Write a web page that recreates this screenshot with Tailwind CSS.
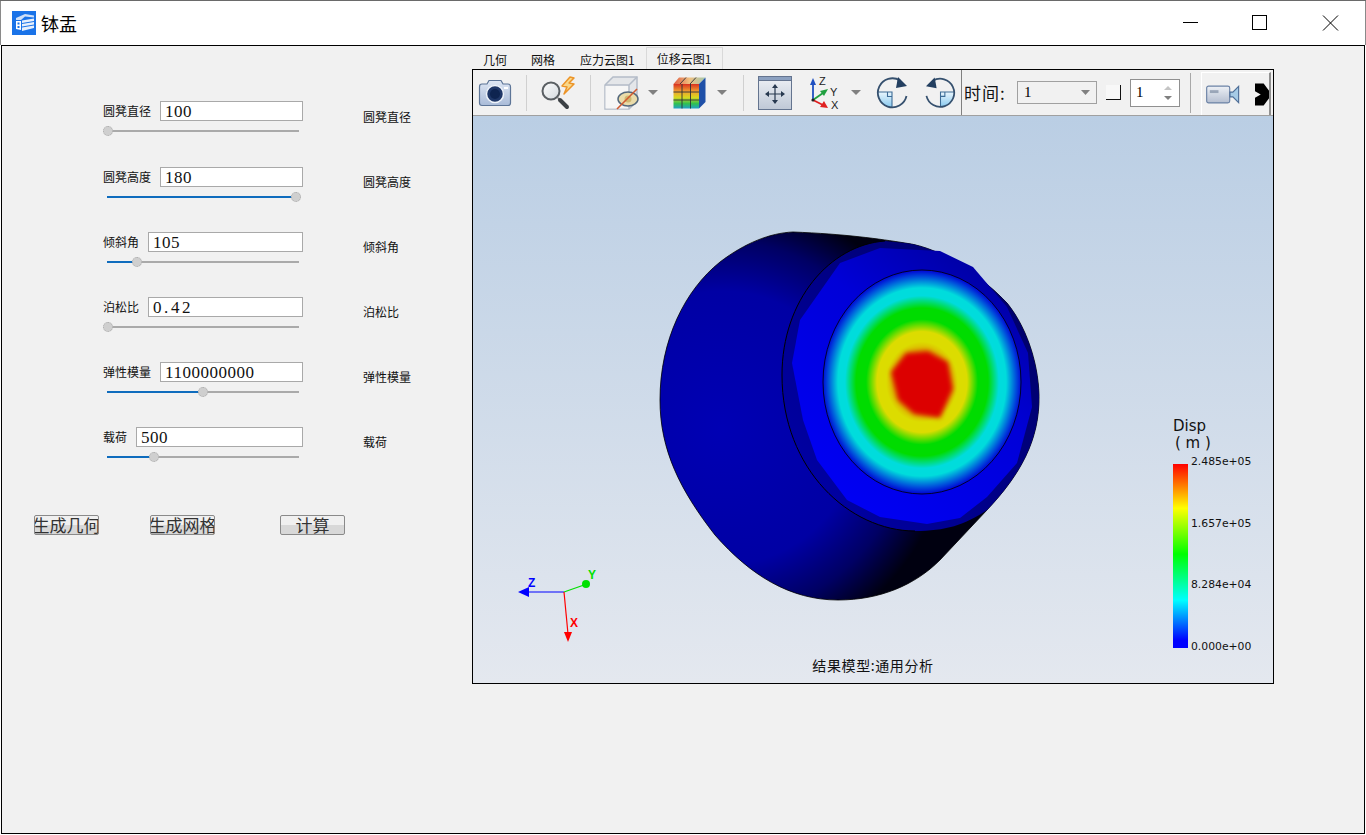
<!DOCTYPE html>
<html lang="en">
<head>
    <meta charset="UTF-8">
    <title>钵盂</title>
    <script src="https://cdn.jsdelivr.net/npm/@tailwindcss/browser@4"></script>
</head>
<body class="bg-white overflow-hidden font-['Noto_Sans_CJK_SC','Liberation_Sans',sans-serif] text-[#111]">
<div class="w-[1366px] h-[835px] flex flex-col border-t border-[#6a6a6a]">
    <!-- title bar -->
    <div class="h-[44px] flex items-center bg-white border-l border-r border-[#8a8a8a]">
        <svg class="ml-[11px] w-[24px] h-[24px]" viewBox="0 0 24 24">
            <rect width="24" height="24" fill="#1a73e8"/>
            <path d="M4 7 L13 3 L22 4.5 L22 6.5 L13 5.5 L9 9 L4 9Z" fill="#cfe0f8"/>
            <path d="M4 10 H9 V19 L4 18Z" fill="#fff"/>
            <path d="M10 9.5 L22 7.5 V10 L10 12Z M10 13 L22 11 V13.5 L10 15.5Z M10 16.5 L22 14.5 V17 L10 20Z" fill="#e8f0fc"/>
            <rect x="5.5" y="11.5" width="2" height="2" fill="#1a73e8"/>
            <rect x="5.5" y="15" width="2" height="2" fill="#1a73e8"/>
        </svg>
        <span class="ml-[5px] text-[18px] leading-none text-black">钵盂</span>
        <svg class="ml-auto mr-[26px] w-[156px] h-[16px]" viewBox="0 0 156 16" fill="none" stroke="#000" stroke-width="1">
            <path d="M0 7.5 H15"/>
            <rect x="69.5" y="0.5" width="14" height="14"/>
            <path d="M140 0.5 L155 15.5 M155 0.5 L140 15.5"/>
        </svg>
    </div>
    <!-- client area -->
    <div class="flex-1 flex mb-[1px] mx-[1px] border border-black bg-[#f1f1f1]">
        <!-- parameter panel -->
        <div class="w-[470px] shrink-0 pt-[55px]">
            <div class="pl-[101px]">
                <div class="flex h-[66px]">
                    <div class="w-[200px]">
                        <div class="flex items-center gap-[9px]"><span class="text-[12px] leading-none">圆凳直径</span><input value="100" class="flex-1 min-w-0 h-[20px] bg-white border border-[#a9a9a9] pl-[4px] pt-[2px] text-[17px] tracking-[0.5px] font-['Liberation_Serif',serif]"></div>
                        <div class="relative ml-[4px] mt-[5px] w-[192px] h-[10px] flex items-center"><div class="flex-1 h-[2px] bg-[#aaa]"></div><div class="absolute left-[-4px] top-0 w-[10px] h-[10px] rounded-full bg-[#cfcfcf] border border-dotted border-[#aaa]"></div></div>
                    </div>
                    <span class="ml-[60px] mt-[9px] text-[12px] leading-[14px]">圆凳直径</span>
                </div>
                <div class="flex h-[65px]">
                    <div class="w-[200px]">
                        <div class="flex items-center gap-[9px]"><span class="text-[12px] leading-none">圆凳高度</span><input value="180" class="flex-1 min-w-0 h-[20px] bg-white border border-[#a9a9a9] pl-[4px] pt-[2px] text-[17px] tracking-[0.5px] font-['Liberation_Serif',serif]"></div>
                        <div class="relative ml-[4px] mt-[5px] w-[192px] h-[10px] flex items-center"><div class="flex-1 h-[2px] bg-[#0f6cbd]"></div><div class="absolute left-[184px] top-0 w-[10px] h-[10px] rounded-full bg-[#cfcfcf] border border-dotted border-[#aaa]"></div></div>
                    </div>
                    <span class="ml-[60px] mt-[8px] text-[12px] leading-[14px]">圆凳高度</span>
                </div>
                <div class="flex h-[65px]">
                    <div class="w-[200px]">
                        <div class="flex items-center gap-[9px]"><span class="text-[12px] leading-none">倾斜角</span><input value="105" class="flex-1 min-w-0 h-[20px] bg-white border border-[#a9a9a9] pl-[4px] pt-[2px] text-[17px] tracking-[0.5px] font-['Liberation_Serif',serif]"></div>
                        <div class="relative ml-[4px] mt-[5px] w-[192px] h-[10px] flex items-center"><div class="w-[26px] h-[2px] bg-[#0f6cbd]"></div><div class="flex-1 h-[2px] bg-[#aaa]"></div><div class="absolute left-[25px] top-0 w-[10px] h-[10px] rounded-full bg-[#cfcfcf] border border-dotted border-[#aaa]"></div></div>
                    </div>
                    <span class="ml-[60px] mt-[8px] text-[12px] leading-[14px]">倾斜角</span>
                </div>
                <div class="flex h-[65px]">
                    <div class="w-[200px]">
                        <div class="flex items-center gap-[9px]"><span class="text-[12px] leading-none">泊松比</span><input value="0.42" class="flex-1 min-w-0 h-[20px] bg-white border border-[#a9a9a9] pl-[4px] pt-[2px] text-[17px] tracking-[2.6px] font-['Liberation_Serif',serif]"></div>
                        <div class="relative ml-[4px] mt-[5px] w-[192px] h-[10px] flex items-center"><div class="flex-1 h-[2px] bg-[#aaa]"></div><div class="absolute left-[-4px] top-0 w-[10px] h-[10px] rounded-full bg-[#cfcfcf] border border-dotted border-[#aaa]"></div></div>
                    </div>
                    <span class="ml-[60px] mt-[8px] text-[12px] leading-[14px]">泊松比</span>
                </div>
                <div class="flex h-[65px]">
                    <div class="w-[200px]">
                        <div class="flex items-center gap-[9px]"><span class="text-[12px] leading-none">弹性模量</span><input value="1100000000" class="flex-1 min-w-0 h-[20px] bg-white border border-[#a9a9a9] pl-[4px] pt-[2px] text-[17px] tracking-[0.5px] font-['Liberation_Serif',serif]"></div>
                        <div class="relative ml-[4px] mt-[5px] w-[192px] h-[10px] flex items-center"><div class="w-[96px] h-[2px] bg-[#0f6cbd]"></div><div class="flex-1 h-[2px] bg-[#aaa]"></div><div class="absolute left-[91px] top-0 w-[10px] h-[10px] rounded-full bg-[#cfcfcf] border border-dotted border-[#aaa]"></div></div>
                    </div>
                    <span class="ml-[60px] mt-[8px] text-[12px] leading-[14px]">弹性模量</span>
                </div>
                <div class="flex h-[65px]">
                    <div class="w-[200px]">
                        <div class="flex items-center gap-[9px]"><span class="text-[12px] leading-none">载荷</span><input value="500" class="flex-1 min-w-0 h-[20px] bg-white border border-[#a9a9a9] pl-[4px] pt-[2px] text-[17px] tracking-[0.5px] font-['Liberation_Serif',serif]"></div>
                        <div class="relative ml-[4px] mt-[5px] w-[192px] h-[10px] flex items-center"><div class="w-[44px] h-[2px] bg-[#0f6cbd]"></div><div class="flex-1 h-[2px] bg-[#aaa]"></div><div class="absolute left-[42px] top-0 w-[10px] h-[10px] rounded-full bg-[#cfcfcf] border border-dotted border-[#aaa]"></div></div>
                    </div>
                    <span class="ml-[60px] mt-[8px] text-[12px] leading-[14px]">载荷</span>
                </div>
            </div>
            <div class="flex pl-[32px] mt-[23px]">
                <button class="w-[65px] h-[20px] overflow-hidden flex items-center justify-center rounded-[2px] border border-[#8a8a8a] bg-[linear-gradient(#f0f0f0_50%,#d8d8d8_50%)] text-[17px] leading-[18px] whitespace-nowrap text-[#333]">生成几何</button>
                <button class="ml-[51px] w-[65px] h-[20px] overflow-hidden flex items-center justify-center rounded-[2px] border border-[#8a8a8a] bg-[linear-gradient(#f0f0f0_50%,#d8d8d8_50%)] text-[17px] leading-[18px] whitespace-nowrap text-[#333]">生成网格</button>
                <button class="ml-[65px] w-[65px] h-[20px] overflow-hidden flex items-center justify-center rounded-[2px] border border-[#8a8a8a] bg-[linear-gradient(#f0f0f0_50%,#d8d8d8_50%)] text-[17px] leading-[18px] whitespace-nowrap text-[#333]">计算</button>
            </div>
        </div>
        <!-- result panel -->
        <div class="w-[802px] shrink-0 flex flex-col pt-[1px]">
            <div class="h-[22px] flex items-end text-[12px] leading-none">
                <span class="ml-[11px] pb-[3px]">几何</span>
                <span class="ml-[24px] pb-[3px]">网格</span>
                <span class="ml-[25px] pb-[3px]">应力云图1</span>
                <span class="ml-[11px] h-[22px] w-[77px] flex items-center justify-center bg-[#f1f1f1] border border-b-0 border-[#d9d9d9]">位移云图1</span>
            </div>
            <div class="w-[802px] h-[615px] border border-black flex flex-col">
                <!-- toolbar -->
                <div class="h-[46px] shrink-0 flex items-center bg-[#f1f1f1] border-b border-[#a0a0a0]">
                    <svg class="ml-[5px] w-[34px] h-[28px]" viewBox="0 0 34 28">
                        <defs><linearGradient id="camBody" x1="0" y1="0" x2="0" y2="1"><stop offset="0" stop-color="#dfe7f4"/><stop offset="1" stop-color="#a9bbd8"/></linearGradient></defs>
                        <path d="M1.5 8 Q1.5 5 4 5 H9 L11 1.5 H23 L25 5 H30 Q32.5 5 32.5 8 V24 Q32.5 26.5 30 26.5 H4 Q1.5 26.5 1.5 24Z" fill="url(#camBody)" stroke="#5d7597" stroke-width="1.2"/>
                        <circle cx="17" cy="15" r="8.5" fill="#1f3768" stroke="#eef3fa" stroke-width="1.5"/>
                        <circle cx="17" cy="15" r="5" fill="#0e2450"/>
                        <rect x="26" y="8" width="4" height="2" fill="#fff"/>
                    </svg>
                    <div class="ml-[14px] w-px h-[36px] bg-[#d0d0d0]"></div>
                    <svg class="ml-[13px] w-[36px] h-[34px]" viewBox="0 0 36 34">
                        <defs><linearGradient id="lens" x1="0" y1="0" x2="1" y2="1"><stop offset="0" stop-color="#fdfdfd"/><stop offset="1" stop-color="#d4dade"/></linearGradient></defs>
                        <circle cx="11" cy="15" r="8.5" fill="url(#lens)" stroke="#5a5f63" stroke-width="2"/>
                        <path d="M18 22 L20 24" stroke="#777" stroke-width="2"/>
                        <path d="M20 24 L27 31" stroke="#3c4145" stroke-width="4" stroke-linecap="round"/>
                        <path d="M30 1 L22 10 L27 11 L24 18 L34 8 L29 7 L34 2Z" fill="#f9d88a" stroke="#ec9428" stroke-width="1.5" stroke-linejoin="round"/>
                    </svg>
                    <div class="ml-[14px] w-px h-[36px] bg-[#d0d0d0]"></div>
                    <svg class="ml-[13px] w-[35px] h-[34px]" viewBox="0 0 35 34">
                        <path d="M1 9 L9 1 H33 V25 L25 33 H1Z" fill="#e4e6e9" stroke="#b4bcc8" stroke-width="1.5"/>
                        <path d="M1.5 9.5 H25 V32.5 H1.5Z" fill="#f6f6f6"/>
                        <path d="M1 9 H25 V33 M25 9 L33 1" fill="none" stroke="#b4bcc8" stroke-width="1.5"/>
                        <ellipse cx="24" cy="23" rx="10" ry="7" fill="#eadcaa" stroke="#54687c" stroke-width="1.5"/>
                        <circle cx="24" cy="23" r="3.5" fill="#d0b870"/>
                        <path d="M13 33 L33 13" stroke="#d05a30" stroke-width="1.6"/>
                    </svg>
                    <svg class="ml-[9px] w-[10px] h-[5px]" viewBox="0 0 10 5"><path d="M0 0 H10 L5 5Z" fill="#808080"/></svg>
                    <svg class="ml-[15px] w-[33px] h-[32px]" viewBox="0 0 33 32">
                        <defs>
                            <linearGradient id="cubeTop" x1="0" y1="0" x2="1" y2="0"><stop offset="0" stop-color="#e05a40"/><stop offset="0.5" stop-color="#f0c080"/><stop offset="1" stop-color="#a0c8b0"/></linearGradient>
                            <linearGradient id="cubeFace" x1="0" y1="0" x2="0" y2="1"><stop offset="0" stop-color="#d83020"/><stop offset="0.3" stop-color="#f0a030"/><stop offset="0.55" stop-color="#d8d820"/><stop offset="0.8" stop-color="#30c050"/><stop offset="1" stop-color="#20a0c8"/></linearGradient>
                        </defs>
                        <path d="M6 0.5 H32.5 L26 7 H0.5Z" fill="url(#cubeTop)"/>
                        <path d="M26 7 L32.5 0.5 V25 L26 31.5Z" fill="#1f50a8"/>
                        <rect x="0.5" y="7" width="25.5" height="24.5" fill="url(#cubeFace)"/>
                        <path d="M9 7 V31.5 M17.5 7 V31.5 M0.5 15 H26 M0.5 23 H26 M13 0.5 L7 7 M23 0.5 L17 7" stroke="#2c3038" stroke-width="0.9"/>
                    </svg>
                    <svg class="ml-[11px] w-[10px] h-[5px]" viewBox="0 0 10 5"><path d="M0 0 H10 L5 5Z" fill="#808080"/></svg>
                    <div class="ml-[16px] w-px h-[36px] bg-[#d0d0d0]"></div>
                    <svg class="ml-[14px] w-[34px] h-[34px]" viewBox="0 0 34 34">
                        <defs><linearGradient id="fitBg" x1="0" y1="0" x2="0" y2="1"><stop offset="0" stop-color="#eef1f6"/><stop offset="1" stop-color="#bfc8d6"/></linearGradient></defs>
                        <rect x="0.5" y="0.5" width="33" height="33" fill="url(#fitBg)" stroke="#64748f"/>
                        <rect x="0.5" y="0.5" width="33" height="4" fill="#8ba0c0" stroke="#64748f"/>
                        <path d="M17 10 V26 M9 18 H25" stroke="#27384f" stroke-width="1.2"/>
                        <path d="M17 8 L14 12 H20Z M17 28 L14 24 H20Z M7 18 L11 15 V21Z M27 18 L23 15 V21Z" fill="#27384f"/>
                    </svg>
                    <svg class="ml-[16px] w-[32px] h-[34px] mr-[-2px]" viewBox="0 0 32 34">
                        <path d="M5 24 V7" stroke="#2050c0" stroke-width="1.8"/>
                        <path d="M5 2 L2 9 H8Z" fill="#2050c0"/>
                        <path d="M5 24 L15 17" stroke="#20a040" stroke-width="1.8"/>
                        <path d="M20 13 L12 15 L16 20Z" fill="#20a040"/>
                        <path d="M5 24 L15 29" stroke="#e02020" stroke-width="1.8"/>
                        <path d="M20 32 L12 31 L16 25Z" fill="#e02020"/>
                        <circle cx="5" cy="24" r="1.6" fill="#222"/>
                        <text x="11" y="9" font-size="11" font-family="Liberation Sans" fill="#222">Z</text>
                        <text x="22" y="20" font-size="11" font-family="Liberation Sans" fill="#222">Y</text>
                        <text x="23" y="33" font-size="11" font-family="Liberation Sans" fill="#222">X</text>
                    </svg>
                    <svg class="ml-[13px] w-[10px] h-[5px]" viewBox="0 0 10 5"><path d="M0 0 H10 L5 5Z" fill="#808080"/></svg>
                    <svg class="ml-[15px] w-[32px] h-[32px]" viewBox="0 0 32 32">
                        <defs><linearGradient id="rotFill" x1="0" y1="0" x2="0" y2="1"><stop offset="0" stop-color="#eaf6fd"/><stop offset="1" stop-color="#86c8ee"/></linearGradient></defs>
                        <path d="M16 15 H1.5 A14.5 15 0 0 0 16 30.5Z" fill="url(#rotFill)"/>
                        <path d="M1.5 15 H16 V30.5 M11.5 15 V19.5 H16" fill="none" stroke="#3d6c96" stroke-width="1.1"/>
                        <path d="M24 3.5 A14.5 14.5 0 1 0 30.5 19" fill="none" stroke="#35506e" stroke-width="1.8"/>
                        <path d="M22 0 L31 9 L20 11Z" fill="#233f60"/>
                    </svg>
                    <svg class="ml-[17px] w-[31px] h-[32px]" viewBox="0 0 32 32">
                        <path d="M16 15 H30.5 A14.5 15 0 0 1 16 30.5Z" fill="url(#rotFill)"/>
                        <path d="M30.5 15 H16 V30.5 M20.5 15 V19.5 H16" fill="none" stroke="#3d6c96" stroke-width="1.1"/>
                        <path d="M8 3.5 A14.5 14.5 0 1 1 1.5 19" fill="none" stroke="#35506e" stroke-width="1.8"/>
                        <path d="M10 0 L1 9 L12 11Z" fill="#233f60"/>
                    </svg>
                    <div class="ml-[5px] w-px h-full bg-[#808080]"></div>
                    <span class="ml-[2px] w-[42px] text-[17px] tracking-[1px] leading-none whitespace-nowrap">时间:</span>
                    <div class="ml-[11px] w-[80px] h-[23px] flex items-center border border-[#a0a0a0] pl-[6px] pr-[6px] text-[15px] leading-none text-black font-['Liberation_Serif',serif]">1<svg class="ml-auto w-[9px] h-[5px]" viewBox="0 0 9 5"><path d="M0 0 H9 L4.5 5Z" fill="#808080"/></svg></div>
                    <div class="ml-[9px] w-[15px] h-[15px] border-r border-b border-[#111] bg-[#f8f8f8]"></div>
                    <div class="ml-[9px] w-[50px] h-[28px] flex items-center justify-between bg-white border border-[#909090] pl-[5px] pr-[7px] text-[15px] leading-none text-black font-['Liberation_Serif',serif]">1
                        <svg class="w-[8px] h-[14px]" viewBox="0 0 8 14"><path d="M0 4 L4 0 L8 4Z" fill="#c4c4c4"/><path d="M0 10 H8 L4 14Z" fill="#808080"/></svg>
                    </div>
                    <div class="ml-[10px] w-px h-[40px] bg-[#a8a8a8]"></div>
                    <div class="ml-[10px] w-[70px] h-[43px] mt-[2px] flex items-center bg-[#f1f1f1] border-t border-l border-r-2 border-t-white border-l-white border-r-[#909090]">
                        <svg class="ml-[4px] w-[35px] h-[19px]" viewBox="0 0 35 19">
                            <defs><linearGradient id="vidBody" x1="0" y1="0" x2="0" y2="1"><stop offset="0" stop-color="#eef1f6"/><stop offset="1" stop-color="#b4bed0"/></linearGradient></defs>
                            <rect x="0.7" y="0.7" width="24" height="17.6" rx="2" fill="url(#vidBody)" stroke="#6b82a5" stroke-width="1.2"/>
                            <rect x="4" y="5" width="9" height="3" fill="#9aa6b8"/>
                            <path d="M25 7 L28 7 L34 1 V18 L28 12 L25 12Z" fill="#a6cbe6" stroke="#4f6f98" stroke-width="1.2"/>
                        </svg>
                        <svg class="ml-[15px] w-[15px] h-[23px]" viewBox="0 0 15 23">
                            <defs><filter id="soft"><feGaussianBlur stdDeviation="0.7"/></filter></defs>
                            <rect width="15" height="23" fill="#f1f1f1"/>
                            <path d="M0 0 H9 L15 8 V15 L9 23 H0 V15 L6 11.5 L0 8Z" fill="#000" filter="url(#soft)"/>
                        </svg>
                    </div>
                </div>
                <!-- 3d view -->
                <div class="relative flex-1 bg-[linear-gradient(#bacee4,#e4e8ef)]">
                    <!-- viewBox origin matches the page position of the view -->
                    <svg class="absolute inset-0 w-full h-full" viewBox="473 116 800 567">
                        <defs>
                            <radialGradient id="bodyShade" gradientUnits="userSpaceOnUse" cx="722" cy="428" r="228">
                                <stop offset="0" stop-color="#0000b4"/>
                                <stop offset="0.6" stop-color="#0000a4"/>
                                <stop offset="0.82" stop-color="#000064"/>
                                <stop offset="1" stop-color="#000010"/>
                            </radialGradient>
                            <linearGradient id="rimShade" gradientUnits="userSpaceOnUse" x1="800" y1="480" x2="1030" y2="300">
                                <stop offset="0" stop-color="#0000a4"/>
                                <stop offset="1" stop-color="#000068"/>
                            </linearGradient>
                            <linearGradient id="bandShade" gradientUnits="userSpaceOnUse" x1="820" y1="500" x2="1010" y2="270">
                                <stop offset="0" stop-color="#0000f6"/>
                                <stop offset="0.6" stop-color="#0000d8"/>
                                <stop offset="1" stop-color="#00009c"/>
                            </linearGradient>
                            <radialGradient id="faceDisp" gradientUnits="userSpaceOnUse" cx="0" cy="0" r="1" gradientTransform="translate(922 382) scale(100 112)">
                                <stop offset="0" stop-color="#dc9000"/>
                                <stop offset="0.28" stop-color="#dcb000"/>
                                <stop offset="0.36" stop-color="#dcdc00"/>
                                <stop offset="0.45" stop-color="#dcdc00"/>
                                <stop offset="0.56" stop-color="#00dc00"/>
                                <stop offset="0.66" stop-color="#00dc00"/>
                                <stop offset="0.77" stop-color="#00dcdc"/>
                                <stop offset="0.84" stop-color="#00dcdc"/>
                                <stop offset="0.94" stop-color="#0050dc"/>
                                <stop offset="1" stop-color="#0000d4"/>
                            </radialGradient>
                            <filter id="redBlur" x="-30%" y="-30%" width="160%" height="160%"><feGaussianBlur stdDeviation="2.5"/></filter>
                        </defs>
                        <path d="M793 232 C845 234 880 239 905 243 C945 248 985 280 1007 303 C1025 325 1038 360 1039 395 C1040 440 1020 475 987 510 L940 560 C915 585 880 600 838 600 C790 600 750 575 715 535 C680 490 660 450 660 400 C660 340 685 290 720 262 C745 243 770 233 793 232Z" fill="url(#bodyShade)" stroke="#000" stroke-width="0.8"/>
                        <path d="M905 243 C945 248 985 280 1007 303 C1025 325 1038 360 1039 395 C1040 440 1020 475 987 510 C965 525 945 531 915 531 C850 531 782 470 782 375 C782 300 830 245 885 241Z" fill="url(#rimShade)"/>
                        <path d="M782 375 C782 300 830 245 885 241 M782 375 C782 470 850 531 915 531" fill="none" stroke="#000" stroke-width="1"/>
                        <path d="M880 248 L940 251 L973 267 L1007 307 L1028 353 L1032 407 L1017 463 L987 497 L960 518 L927 524 L880 517 L847 500 L817 460 L803 420 L792 363 L800 320 L840 263Z" fill="url(#bandShade)"/>
                        <ellipse cx="922" cy="382" rx="99" ry="112" fill="url(#faceDisp)" stroke="#000" stroke-width="0.8"/>
                        <path d="M891 372 L906 353 L928 351 L948 362 L953 389 L940 418 L914 414 L898 400Z" fill="#dc0000" filter="url(#redBlur)"/>
                        <!-- triad -->
                        <path d="M564 592 H525" stroke="#0000ff" stroke-width="1.2"/>
                        <path d="M518 592 L529 587 V597Z" fill="#0000ff"/>
                        <path d="M564 592 L584 585" stroke="#00e000" stroke-width="1.2"/>
                        <circle cx="586" cy="584" r="4" fill="#00e000"/>
                        <path d="M564 592 L568 634" stroke="#ff0000" stroke-width="1.2"/>
                        <path d="M568 642 L564 632 H572Z" fill="#ff0000"/>
                        <text x="528" y="587" font-size="12" font-weight="700" font-family="Liberation Sans" fill="#0000ff">Z</text>
                        <text x="588" y="579" font-size="12" font-weight="700" font-family="Liberation Sans" fill="#00e000">Y</text>
                        <text x="570" y="627" font-size="12" font-weight="700" font-family="Liberation Sans" fill="#ff0000">X</text>
                    </svg>
                    <div class="absolute left-[700px] top-[302px] text-[15px] leading-[17px] text-[#111] font-['DejaVu_Sans',sans-serif]">Disp<br><span class="ml-[2px]">( m )</span></div>
                    <div class="absolute left-[700px] top-[348px] w-[15px] h-[184px] bg-[linear-gradient(#ff0000,#ffff00_24%,#00ff00_49%,#00ffff_74%,#0000ff_96%)]"></div>
                    <div class="absolute left-[718px] top-[339px] h-[199px] flex flex-col justify-between text-[10.8px] leading-[14px] text-[#111] font-['DejaVu_Sans',sans-serif]">
                        <span>2.485e+05</span><span>1.657e+05</span><span>8.284e+04</span><span>0.000e+00</span>
                    </div>
                    <div class="absolute left-0 right-0 bottom-[11px] text-center text-[14px] tracking-[0.6px] leading-none text-[#111]">结果模型:通用分析</div>
                </div>
            </div>
        </div>
    </div>
</div>
</body>
</html>
